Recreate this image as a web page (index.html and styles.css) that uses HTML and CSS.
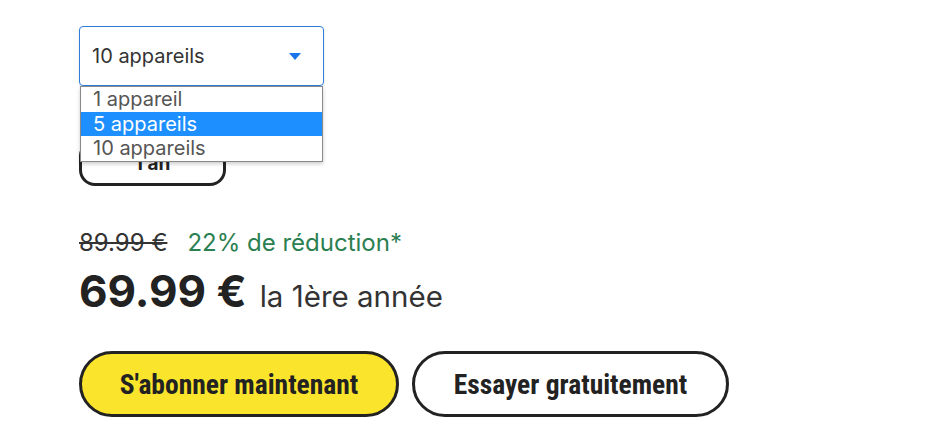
FILE: index.html
```html
<!DOCTYPE html>
<html lang="fr">
<head>
  <meta charset="UTF-8">
  <title>Abonnement</title>
  <link rel="stylesheet" href="styles.css">
</head>
<body>
  <div class="offer">
    <div class="device-select">
      <div class="select-box">
        <span>10 appareils</span>
        <svg class="caret" width="12" height="7" viewBox="0 0 12 7"><path d="M0 0h12L6 7z" fill="#1a73e8"/></svg>
      </div>
      <ul class="select-list">
        <li>1 appareil</li>
        <li class="active">5 appareils</li>
        <li>10 appareils</li>
      </ul>
    </div>

    <div class="terms">
      <button class="term">1 an</button>
    </div>

    <div class="price">
      <div class="price-old">
        <s>89.99 €</s>
        <span class="discount">22% de réduction*</span>
      </div>
      <div class="price-now">
        <strong>69.99 €</strong>
        <span>la 1ère année</span>
      </div>
    </div>

    <div class="actions">
      <button class="btn btn-yellow">S'abonner maintenant</button>
      <button class="btn">Essayer gratuitement</button>
    </div>
  </div>
</body>
</html>
```

FILE: styles.css
```css
body {
  margin: 0;
  background: #fff;
  color: #222;
  font-family: Inter, "Noto Sans", sans-serif;
}
.offer {
  padding: 26px 0 0 79px;
}
.device-select {
  position: relative;
  width: 245px;
}
.select-box {
  height: 58px;
  border: 1px solid #2f7fd9;
  border-radius: 4px;
  display: flex;
  align-items: center;
  justify-content: space-between;
  padding: 0 22px 0 12px;
  font-size: 20px;
  color: #333;
  box-shadow: 0 1px 2px rgba(0,0,0,0.15);
}
.caret {
  margin-top: 1px;
}
.select-list {
  position: absolute;
  top: 60px;
  left: 1px;
  width: 241px;
  margin: 0;
  padding: 0;
  list-style: none;
  background: #fff;
  border: 1px solid #888;
  box-shadow: 0 2px 4px rgba(0,0,0,0.2);
  z-index: 2;
}
.select-list li {
  height: 24.5px;
  line-height: 24px;
  padding-left: 12px;
  font-size: 20px;
  color: #555;
}
.select-list li.active {
  background: #1e8fff;
  color: #fff;
}
.terms {
  margin-top: 54px;
}
.term {
  width: 147px;
  height: 46px;
  border: 3px solid #222;
  border-radius: 16px;
  background: #fff;
  font-family: Inter, sans-serif;
  font-weight: 700;
  font-size: 19px;
  color: #222;
}
.price {
  margin-top: 42px;
}
.price-old {
  font-size: 24px;
  display: flex;
  gap: 20px;
  color: #333;
}
.price-old s {
  text-decoration-thickness: 2px;
}
.discount {
  color: #2b8052;
}
.price-now {
  margin-top: 7px;
  display: flex;
  align-items: baseline;
  gap: 13px;
}
.price-now strong {
  font-size: 44px;
  font-weight: 700;
  color: #222;
}
.price-now span {
  font-size: 29.5px;
  color: #333;
}
.actions {
  margin-top: 33px;
  display: flex;
  gap: 13px;
}
.btn {
  height: 66px;
  padding: 0 20px;
  border: 3px solid #222;
  border-radius: 33px;
  background: #fff;
  font-family: "Liberation Sans Narrow", "Roboto Condensed", Roboto, sans-serif;
  font-weight: 700;
  font-size: 27.5px;
  color: #222;
}
.btn-yellow {
  background: #fbe42c;
  width: 320px;
}
.btn + .btn {
  width: 317px;
}
```
